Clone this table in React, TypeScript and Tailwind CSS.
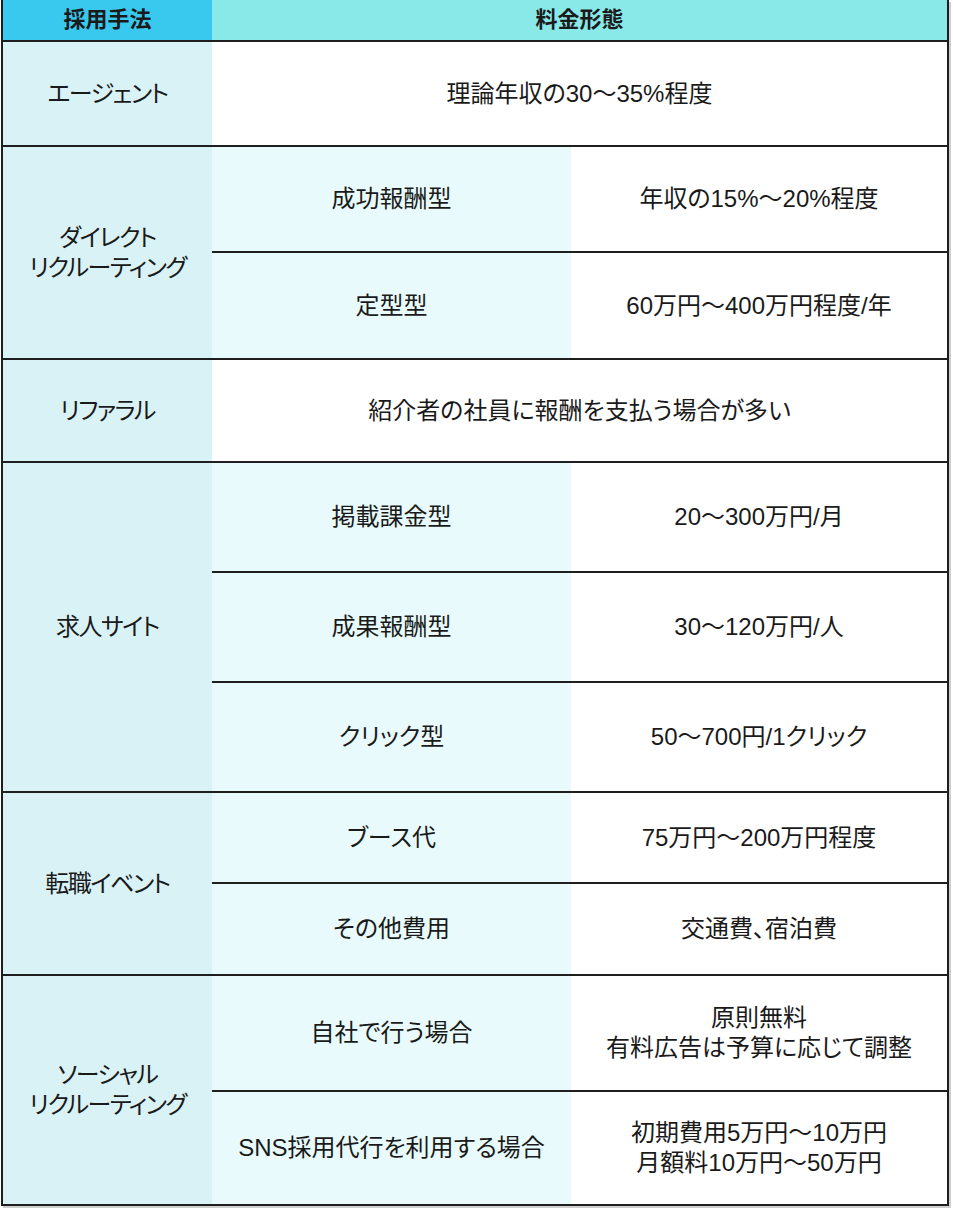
import React from "react";

type Sub = { name?: string; price: React.ReactNode; h: string };
type Group = { method: React.ReactNode; subs: Sub[] };

const groups: Group[] = [
  {
    method: "エージェント",
    subs: [{ price: "理論年収の30〜35%程度", h: "h-[103px]" }],
  },
  {
    method: (
      <>
        ダイレクト
        <br />
        リクルーティング
      </>
    ),
    subs: [
      { name: "成功報酬型", price: "年収の15%〜20%程度", h: "h-[106px] border-b-2" },
      { name: "定型型", price: "60万円〜400万円程度/年", h: "h-[105px]" },
    ],
  },
  {
    method: "リファラル",
    subs: [{ price: "紹介者の社員に報酬を支払う場合が多い", h: "h-[101px]" }],
  },
  {
    method: "求人サイト",
    subs: [
      { name: "掲載課金型", price: "20〜300万円/月", h: "h-[110px] border-b-2" },
      { name: "成果報酬型", price: "30〜120万円/人", h: "h-[110px] border-b-2" },
      { name: "クリック型", price: "50〜700円/1クリック", h: "h-[108px]" },
    ],
  },
  {
    method: "転職イベント",
    subs: [
      { name: "ブース代", price: "75万円〜200万円程度", h: "h-[91px] border-b-2" },
      { name: "その他費用", price: "交通費、宿泊費", h: "h-[90px]" },
    ],
  },
  {
    method: (
      <>
        ソーシャル
        <br />
        リクルーティング
      </>
    ),
    subs: [
      {
        name: "自社で行う場合",
        price: (
          <>
            原則無料
            <br />
            有料広告は予算に応じて調整
          </>
        ),
        h: "h-[116px] border-b-2",
      },
      {
        name: "SNS採用代行を利用する場合",
        price: (
          <>
            初期費用5万円〜10万円
            <br />
            月額料10万円〜50万円
          </>
        ),
        h: "h-[112px]",
      },
    ],
  },
];

export default function App() {
  return (
    <div
      className="w-[953px] h-[1208px] bg-white text-[#1a1a1a] text-[22px] leading-[30px] [font-feature-settings:'palt']"
      style={{ fontFamily: '"Liberation Sans", "Noto Sans CJK JP", sans-serif' }}
    >
      <div className="ml-[1px] w-[948px] border-x-2 border-[#1e1e1e] shadow-[2px_2px_0_#cfcfcf]">
        {/* header */}
        <div className="flex h-[42px] border-b-2 border-[#1e1e1e] font-bold">
          <div className="w-[209px] bg-[#39c9ef] flex items-center justify-center">採用手法</div>
          <div className="flex-1 bg-[#88e9e8] flex items-center justify-center">料金形態</div>
        </div>

        {groups.map((g, i) => (
          <div key={i} className="flex border-b-2 border-[#1e1e1e]">
            <div className="w-[209px] bg-[#d9f2f6] flex items-center justify-center text-center text-[24px] tracking-[-1.5px]">
              {g.method}
            </div>
            <div className="flex-1 flex flex-col text-[24px]">
              {g.subs.map((s, j) => (
                <div key={j} className={`flex border-[#1e1e1e] ${s.h}`}>
                  {s.name ? (
                    <>
                      <div className="w-[359px] bg-[#e8fafb] flex items-center justify-center text-center">
                        {s.name}
                      </div>
                      <div className="flex-1 bg-white flex items-center justify-center text-center">
                        {s.price}
                      </div>
                    </>
                  ) : (
                    <div className="flex-1 bg-white flex items-center justify-center text-center">
                      {s.price}
                    </div>
                  )}
                </div>
              ))}
            </div>
          </div>
        ))}
      </div>
    </div>
  );
}
